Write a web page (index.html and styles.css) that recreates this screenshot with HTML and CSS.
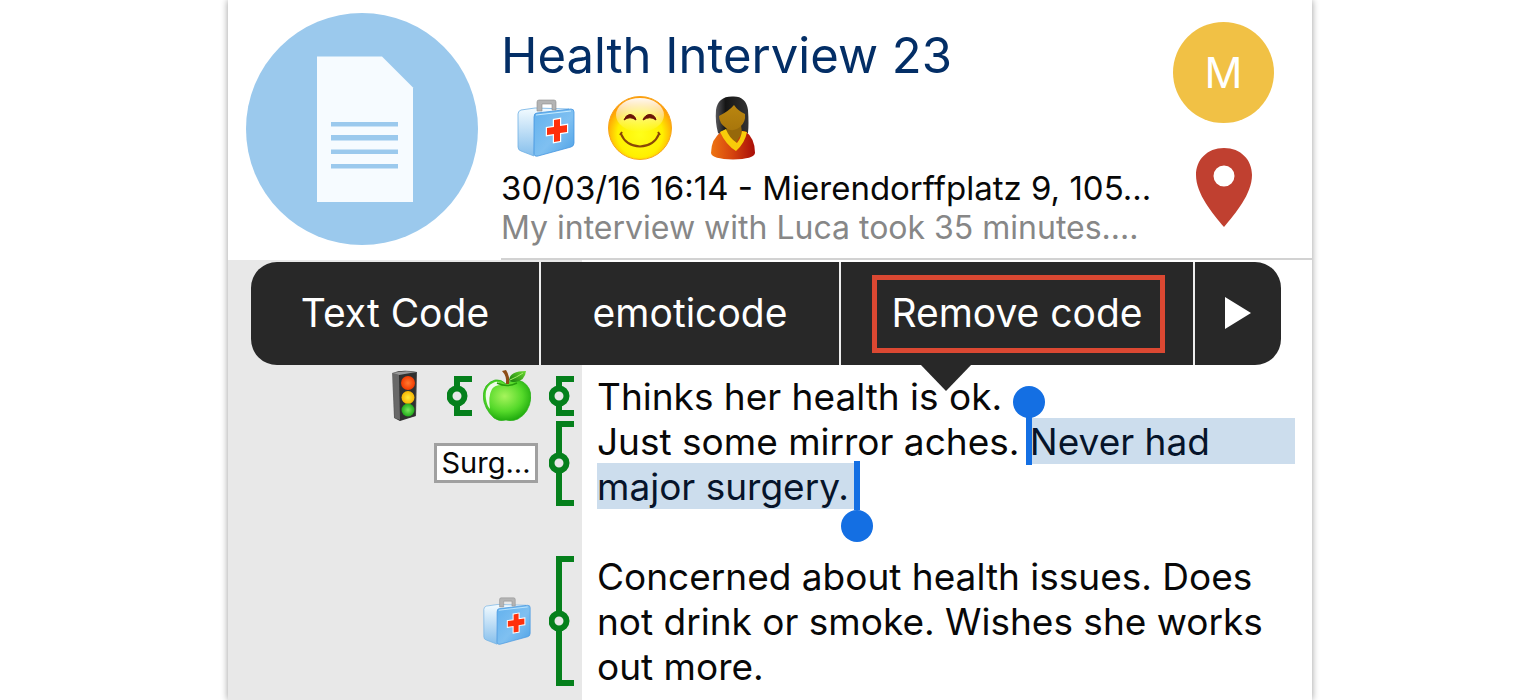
FILE: index.html
```html
<!DOCTYPE html>
<html lang="en">
<head>
<meta charset="utf-8">
<title>Health Interview 23</title>
<link rel="stylesheet" href="styles.css">
</head>
<body>
<svg class="defs" aria-hidden="true">
  <defs>
    <linearGradient id="caseFront" x1="0" y1="0" x2="1" y2="1"><stop offset="0" stop-color="#62b1ee"/><stop offset=".55" stop-color="#7fc0f1"/><stop offset="1" stop-color="#4ba0e6"/></linearGradient>
    <linearGradient id="caseSide" x1="0" y1="0" x2="0" y2="1"><stop offset="0" stop-color="#f3fbff"/><stop offset="1" stop-color="#86bfec"/></linearGradient>
    <radialGradient id="face" cx=".5" cy=".6" r=".55"><stop offset="0" stop-color="#ffff1a"/><stop offset=".65" stop-color="#fff000"/><stop offset="1" stop-color="#ff9c08"/></radialGradient>
    <linearGradient id="shine" x1="0" y1="0" x2="0" y2="1"><stop offset="0" stop-color="#fff" stop-opacity=".95"/><stop offset="1" stop-color="#fff" stop-opacity="0"/></linearGradient>
    <linearGradient id="dress" x1="0" y1="0" x2="1" y2="0"><stop offset="0" stop-color="#ee7412"/><stop offset=".5" stop-color="#d4420e"/><stop offset="1" stop-color="#a80d08"/></linearGradient>
    <linearGradient id="skin" x1="0" y1="0" x2="0" y2="1"><stop offset="0" stop-color="#ba860f"/><stop offset="1" stop-color="#a8760c"/></linearGradient>
    <linearGradient id="hair" x1="0" y1="0" x2="1" y2="0"><stop offset="0" stop-color="#58585c"/><stop offset=".3" stop-color="#151515"/><stop offset="1" stop-color="#333"/></linearGradient>
    <radialGradient id="apple" cx=".45" cy=".4" r=".62"><stop offset="0" stop-color="#a6f45c"/><stop offset=".6" stop-color="#55d92a"/><stop offset="1" stop-color="#1ca80c"/></radialGradient>
    <linearGradient id="leaf" x1="0" y1="1" x2="1" y2="0"><stop offset="0" stop-color="#167c0c"/><stop offset="1" stop-color="#6ddb32"/></linearGradient>
    <linearGradient id="lamp" x1="0" y1="0" x2="1" y2="0"><stop offset="0" stop-color="#777"/><stop offset=".3" stop-color="#2a2a2a"/><stop offset="1" stop-color="#4a4a4a"/></linearGradient>
    <radialGradient id="red"><stop offset="0" stop-color="#ff7a30"/><stop offset="1" stop-color="#f23a00"/></radialGradient>
    <radialGradient id="amber"><stop offset="0" stop-color="#ffe83a"/><stop offset="1" stop-color="#f6b400"/></radialGradient>
    <radialGradient id="green"><stop offset="0" stop-color="#79e65c"/><stop offset="1" stop-color="#20aa1a"/></radialGradient>
  </defs>
  <symbol id="firstaid" viewBox="0 0 58 58">
    <path d="M1 15Q1 12 4 11L18 9 52 10 46 14 18 16 17 57 4 52Q1 51 1 48Z" fill="url(#caseSide)" stroke="#6fb0e4" stroke-width=".8"/>
    <path d="M20 14L54 10Q57 10 57 13V44Q57 47 54 48L21 57Q17 58 17 54V18Q17 14 20 14Z" fill="url(#caseFront)" stroke="#4595df" stroke-width=".8"/>
    <path d="M19 16L54 12" stroke="#c8ecff" fill="none"/>
    <path d="M20 12V3q0-2 2-2h15q2 0 2 2v8h-4V5h-10v7z" fill="#b4b4b4" stroke="#8c8c8c" stroke-width=".6"/>
    <path d="M37 21l6-1v7l7-1v7l-7 1v8l-6 1v-8l-7 1v-7l7-1z" fill="#ff300c" stroke="#fff" stroke-width="2.4" paint-order="stroke"/>
  </symbol>
</svg>
<main class="card">
  <header class="head">
    <svg class="doc" viewBox="0 0 232 232" role="img" aria-label="Document">
      <circle cx="116" cy="116" r="116" fill="#9bc9ed"/>
      <path d="M71 43.500h65l31 31V189H71z" fill="#f6fbff"/>
      <path d="M85 109h67v4.500H85zM85 122h67v5.500H85zM85 136.500h67v4.500H85zM85 151h67v4.500H85z" fill="#9bc9ed"/>
    </svg>
    <div class="info">
      <div class="summary">
        <h1 class="title">Health Interview 23</h1>
        <div class="tags">
          <svg class="tag-case" viewBox="0 0 58 58" role="img" aria-label="First aid"><use href="#firstaid"/></svg>
          <svg class="tag-smile" viewBox="0 0 64 64" role="img" aria-label="Smile">
            <circle cx="32" cy="32" r="31.500" fill="url(#face)" stroke="#f7a51c"/>
            <ellipse cx="32" cy="19" rx="24" ry="17" fill="url(#shine)"/>
            <path d="M16 24Q18 18.500 22 18.500Q27 19 28 24Q22 19.500 16 24ZM35 24Q37 18.500 42 18.500Q47 19 48 24Q42 19.500 35 24Z" fill="#6b1408" stroke="#6b1408"/>
            <path d="M13 38Q18 50 32 50.500Q46 50 51 38M12 39l2-3M50 36l2 3" fill="none" stroke="#8a4706" stroke-width="2"/>
          </svg>
          <svg class="tag-woman" viewBox="0 0 46 64" role="img" aria-label="Woman">
            <path d="M8 37Q5 26 6 14Q8 0 23 .500Q36 0 38 14Q39 28 38 37L30 42H16Z" fill="url(#hair)"/>
            <path d="M1 57Q1 43 12 35H35Q45 42 45 57Q44 63 23 63.500Q2 63 1 57Z" fill="url(#dress)"/>
            <path d="M17 29H31L32 37 26 47 16 37Z" fill="#96680a"/>
            <path d="M9 20Q19 15 24 9Q28 15 35 18Q36 26 30 31Q23 37 16 32Q9 27 9 20Z" fill="url(#skin)"/>
            <path d="M10 36L16 33Q19 42 27 47Q31 42 32 35L37 36Q35 47 26 55Q16 49 10 36Z" fill="#f8cc0a"/>
          </svg>
        </div>
        <p class="place">30/03/16 16:14 - Mierendorffplatz 9, 105...</p>
        <p class="note">My interview with Luca took 35 minutes....</p>
      </div>
      <div class="side">
        <span class="avatar">M</span>
        <svg class="pin" viewBox="0 0 56 79" role="img" aria-label="Location"><path fill="#c04030" fill-rule="evenodd" d="M28 0C45 0 56 12 56 27C56 46 39 66 28 79C17 66 0 46 0 27C0 12 11 0 28 0ZM28 17.500a10.500 10.500 0 1 0 0 21a10.500 10.500 0 1 0 0-21Z"/></svg>
      </div>
    </div>
  </header>

  <section class="body">
    <nav class="menu" aria-label="Selection">
      <button class="item item-text" type="button">Text Code</button>
      <button class="item item-emoti" type="button">emoticode</button>
      <button class="item item-remove" type="button">Remove code</button>
      <button class="item item-more" type="button" aria-label="More"><svg class="play" viewBox="0 0 26 32"><path d="M0 0L26 16 0 32z" fill="#fff"/></svg></button>
    </nav>
    <div class="gutter">
      <div class="code code-short">
        <svg class="lights" viewBox="0 0 25 51" role="img" aria-label="Traffic light">
          <path d="M0 3Q10-1 25 2L24 46 8 51 2 48Z" fill="url(#lamp)"/><path d="M7 4L24 3 23 46 8 50Z" fill="#303030"/>
          <path d="M1 3L7 5 8 50 3 48Z" fill="#686868"/><path d="M1 3Q12 0 24 2L7 5Z" fill="#999"/>
          <circle cx="16" cy="13" r="7" fill="url(#red)"/><circle cx="16" cy="27.500" r="6.500" fill="url(#amber)"/><circle cx="16" cy="40" r="6.500" fill="url(#green)"/>
        </svg>
        <svg class="bracket bracket-s" viewBox="0 0 25 40"><path d="M25 3H10V37H25" class="rail"/><circle cx="10" cy="20" r="7.500" class="knob"/></svg>
        <svg class="apple" viewBox="0 0 48 51" role="img" aria-label="Apple">
          <path d="M23 14Q31 7 40 12Q48 17 48 28Q46 43 35 49Q29 52 23 50Q16 52 11 48Q1 39 0 26Q1 13 12 10Q18 9 23 14Z" fill="url(#apple)" stroke="#2bb218" stroke-width=".7"/>
          <path d="M12 12Q1 16 3 29Q4 36 7 39Q5 26 9 19Q12 15 18 15Q16 11 12 12Z" fill="#fff" opacity=".9"/>
          <path d="M14 13Q24 18 34 13" stroke="#279d0c" stroke-width="1.500" fill="none"/>
          <path d="M23 14Q24 6 19 1L23 0Q27 6 26 14Z" fill="#8c4c16"/>
          <path d="M26 10Q27 1 43 1Q42 11 32 12Q27 12 26 10Z" fill="url(#leaf)"/><path d="M27 10Q34 7 40 3" stroke="#a4ee6b" fill="none"/>
        </svg>
        <svg class="bracket bracket-s" viewBox="0 0 25 40"><path d="M25 3H10V37H25" class="rail"/><circle cx="10" cy="20" r="7.500" class="knob"/></svg>
      </div>
      <div class="code code-mid">
        <span class="label">Surg...</span>
        <svg class="bracket bracket-m" viewBox="0 0 25 85"><path d="M25 3H10V82H25" class="rail"/><circle cx="10" cy="42" r="7.500" class="knob"/></svg>
      </div>
      <div class="code code-long">
        <svg class="kit" viewBox="0 0 58 58" role="img" aria-label="First aid"><use href="#firstaid"/></svg>
        <svg class="bracket bracket-l" viewBox="0 0 25 130"><path d="M25 3H10V127H25" class="rail"/><circle cx="10" cy="65" r="7.500" class="knob"/></svg>
      </div>
    </div>
    <article class="text">
      <p class="para">
        <span class="line">Thinks her health is ok.</span>
        <span class="line">Just some mirror aches.&nbsp;<mark class="sel sel-start">Never had</mark></span>
        <span class="line"><mark class="sel sel-end">major surgery.</mark></span>
      </p>
      <p class="para">
        <span class="line">Concerned about health issues. Does</span>
        <span class="line">not drink or smoke. Wishes she works</span>
        <span class="line">out more.</span>
      </p>
    </article>
  </section>
</main>
</body>
</html>
```
FILE: styles.css
```css
* { box-sizing: border-box; }
html { background: #fff; overflow: hidden; }
body { margin: 0; font-family: Inter, "Liberation Sans", sans-serif; color: #080808; }
h1, p { margin: 0; font-weight: 400; white-space: nowrap; }
svg { display: block; flex: none; }
.defs { position: absolute; width: 0; height: 0; }

.card { max-width: 1084px; min-height: 100vh; margin: 0 auto; display: flex; flex-direction: column; background: #fff; box-shadow: 0 0 7px rgba(0, 0, 0, .4); }

.head { display: flex; gap: 23px; padding-left: 18px; }
.doc { width: 232px; height: 232px; margin-top: 13px; }
.info { flex: 1; display: flex; justify-content: space-between; height: 260px; border-bottom: 2px solid #d2d2d2; }
.summary { padding-top: 26px; }
.title { font-size: 49px; line-height: 60px; color: #032e66; }
.tags { display: flex; align-items: center; height: 64px; margin-top: 10px; padding-left: 16px; }
.tag-case { width: 58px; height: 58px; }
.tag-smile { width: 64px; height: 64px; margin-left: 33px; }
.tag-woman { width: 46px; height: 64px; margin-left: 38px; }
.place, .note { line-height: 40px; }
.place { margin-top: 8px; font-size: 33px; }
.note { font-size: 32px; color: #878787; }
.side { display: flex; flex-direction: column; align-items: center; gap: 25px; padding: 22px 38px 0 0; }
.avatar { display: flex; align-items: center; justify-content: center; width: 101px; height: 101px; border-radius: 50%; background: #f1c145; color: #fff; font-size: 42px; }
.pin { width: 56px; height: 79px; }

.body { position: relative; flex: 1; display: flex; }
.gutter { width: 354px; padding-top: 113px; background: #e8e8e8; }
.code { display: flex; align-items: center; justify-content: flex-end; padding-right: 8px; }
.code-short { height: 45px; }
.code-mid { height: 90px; gap: 11px; }
.code-long { height: 135px; margin-top: 45px; gap: 18px; }
.rail { fill: none; stroke: #05801c; stroke-width: 6; }
.knob { fill: #e8e8e8; stroke: #05801c; stroke-width: 6; }
.bracket { width: 25px; }
.bracket-s { height: 40px; }
.bracket-m { height: 85px; }
.bracket-l { height: 130px; }
.lights { width: 25px; height: 51px; margin-right: 30px; }
.apple { width: 48px; height: 51px; margin: 0 18px 0 11px; }
.kit { width: 48px; height: 48px; }
.label { width: 104px; height: 40px; border: 3px solid #a0a0a0; background: #fff; font-size: 29px; line-height: 34px; text-align: center; }

.text { flex: 1; padding: 113px 17px 0 15px; font-size: 37px; }
.para + .para { margin-top: 45px; }
.line { display: flex; height: 45px; line-height: 47px; }
.sel { position: relative; height: 46px; background: #ccdded; color: #06142a; }
.sel-start { flex: 1; }
.sel-end { padding-right: 5px; }
.sel-start::before, .sel-end::before { content: ""; position: absolute; top: -2px; width: 6px; height: 49px; background: #146fe3; }
.sel-start::after, .sel-end::after { content: ""; position: absolute; width: 32px; height: 32px; border-radius: 50%; background: #146fe3; }
.sel-start::before { left: -4px; }
.sel-start::after { left: -17px; top: -32px; }
.sel-end::before { right: -6px; }
.sel-end::after { right: -19px; top: 47px; }

.menu { position: absolute; z-index: 1; top: 2px; left: 23px; right: 31px; height: 103px; display: flex; gap: 2px; }
.menu::after { content: ""; position: absolute; left: 669px; top: 102px; width: 52px; height: 27px; background: #282828; clip-path: polygon(0 0, 100% 0, 50% 100%); }
.item { position: relative; margin: 0; padding: 0 0 2px; border: 0; background: #282828; color: #fff; font: 400 39px/46px Inter, "Liberation Sans", sans-serif; }
.item + .item { box-shadow: -2px 0 0 #eee; }
.item-text { flex: 288; border-radius: 26px 0 0 26px; }
.item-emoti { flex: 298; }
.item-remove { flex: 352; }
.item-remove::after { content: ""; position: absolute; inset: 13px 28px 12px 31px; border: 5px solid #db4832; }
.item-more { flex: 86; border-radius: 0 26px 26px 0; }
.play { width: 26px; height: 32px; margin: 0 auto; }
```
